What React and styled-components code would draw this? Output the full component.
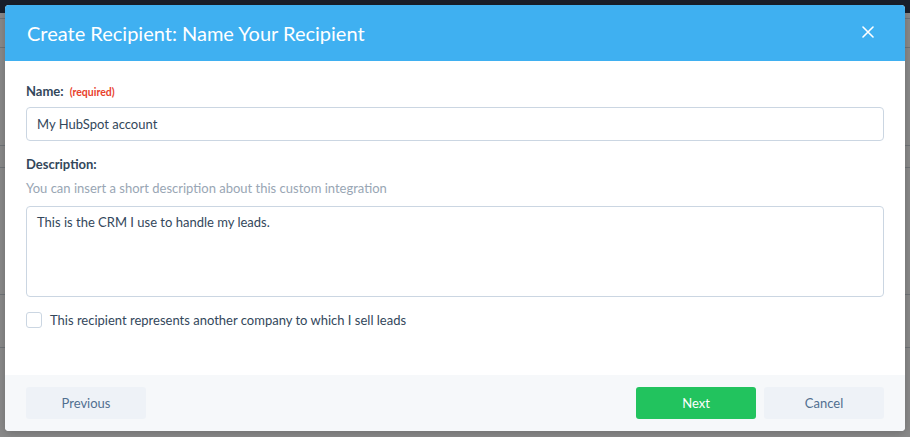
import React, { useState } from "react";
import styled, { createGlobalStyle } from "styled-components";

const GlobalStyle = createGlobalStyle`
  html, body {
    margin: 0;
    padding: 0;
    width: 910px;
    height: 437px;
    overflow: hidden;
    font-family: "Lato", "Helvetica Neue", Arial, sans-serif;
  }
  * { box-sizing: border-box; }
`;

// page behind the modal
const Page = styled.div`
  position: relative;
  width: 910px;
  height: 437px;
  background: #fff;
  overflow: hidden;
`;

const Nav = styled.div`
  height: 13px;
  background: #2f3a4f;
`;

const Row = styled.div`
  height: ${(p) => p.h}px;
  border-bottom: 1px solid #cfd6de;
`;

const Backdrop = styled.div`
  position: absolute;
  inset: 0;
  background: rgba(0, 0, 0, 0.46);
`;

const Modal = styled.div`
  position: absolute;
  top: 5px;
  left: 5px;
  width: 900px;
  height: 426px;
  background: #fff;
  border-radius: 4px;
  overflow: hidden;
  display: flex;
  flex-direction: column;
  box-shadow: 0 2px 10px rgba(0, 0, 0, 0.2);
`;

const Header = styled.div`
  height: 56px;
  flex: none;
  background: #3fb0f1;
  display: flex;
  align-items: center;
  justify-content: space-between;
  padding: 0 29px 0 22px;
`;

const Title = styled.h1`
  margin: 0;
  font-size: 20px;
  font-weight: 400;
  color: #fff;
`;

const CloseButton = styled.button`
  border: 0;
  background: none;
  padding: 0;
  width: 14px;
  height: 14px;
  display: flex;
  cursor: pointer;
`;

const Body = styled.div`
  flex: 1;
  padding: 22px 21px 0;
  display: flex;
  flex-direction: column;
`;

const Label = styled.div`
  display: flex;
  align-items: baseline;
  gap: 6px;
  font-size: 13px;
  font-weight: 700;
  color: #33475b;
  line-height: 16px;
  margin-bottom: ${(p) => p.mb || 0}px;
`;

const Required = styled.span`
  font-size: 10.5px;
  font-weight: 700;
  color: #e8412c;
`;

const Help = styled.div`
  font-size: 13px;
  color: #99a6b4;
  line-height: 16px;
  margin-bottom: 10px;
`;

const Input = styled.input`
  width: 100%;
  height: 34px;
  border: 1px solid #cbd6e2;
  border-radius: 4px;
  padding: 0 10px;
  font-family: inherit;
  font-size: 13px;
  color: #33475b;
  outline: none;
  margin-bottom: 15px;
`;

const TextArea = styled.textarea`
  width: 100%;
  height: 91px;
  border: 1px solid #cbd6e2;
  border-radius: 4px;
  padding: 7px 10px;
  font-family: inherit;
  font-size: 13px;
  line-height: 16px;
  color: #33475b;
  resize: none;
  outline: none;
  margin: 0 0 15px;
`;

const CheckRow = styled.label`
  display: flex;
  align-items: center;
  gap: 8px;
  font-size: 13px;
  color: #33475b;
  cursor: pointer;
`;

const Box = styled.span`
  width: 16px;
  height: 16px;
  border: 1px solid #cbd6e2;
  border-radius: 3px;
  background: ${(p) => (p.checked ? "#3fb0f1" : "#fff")};
`;

const Footer = styled.div`
  height: 56px;
  flex: none;
  background: #f6f8fa;
  display: flex;
  align-items: center;
  padding: 0 21px;
  gap: 8px;
`;

const Spacer = styled.div`
  flex: 1;
`;

const Button = styled.button`
  width: 120px;
  height: 32px;
  border: 0;
  border-radius: 3px;
  font-family: inherit;
  font-size: 13px;
  cursor: pointer;
  background: ${(p) => (p.primary ? "#22c35e" : "#eef2f7")};
  color: ${(p) => (p.primary ? "#fff" : "#516f90")};
`;

export default function App() {
  const [name, setName] = useState("My HubSpot account");
  const [desc, setDesc] = useState("This is the CRM I use to handle my leads.");
  const [resell, setResell] = useState(false);

  return (
    <>
      <GlobalStyle />
      <Page>
        <Nav />
        <Row h={6} />
        <Row h={29} />
        <Row h={98} />
        <Row h={22} />
        <Row h={127} />
        <Row h={53} />
        <Backdrop />
        <Modal>
          <Header>
            <Title>Create Recipient: Name Your Recipient</Title>
            <CloseButton aria-label="Close">
              <svg width="12" height="12" viewBox="0 0 12 12">
                <path d="M1 1L11 11M11 1L1 11" stroke="#fff" strokeWidth="1.6" strokeLinecap="round" />
              </svg>
            </CloseButton>
          </Header>
          <Body>
            <Label mb={7}>
              Name: <Required>(required)</Required>
            </Label>
            <Input value={name} onChange={(e) => setName(e.target.value)} />
            <Label mb={8}>Description:</Label>
            <Help>You can insert a short description about this custom integration</Help>
            <TextArea value={desc} onChange={(e) => setDesc(e.target.value)} />
            <CheckRow onClick={() => setResell(!resell)}>
              <Box checked={resell} />
              This recipient represents another company to which I sell leads
            </CheckRow>
          </Body>
          <Footer>
            <Button>Previous</Button>
            <Spacer />
            <Button primary>Next</Button>
            <Button>Cancel</Button>
          </Footer>
        </Modal>
      </Page>
    </>
  );
}
